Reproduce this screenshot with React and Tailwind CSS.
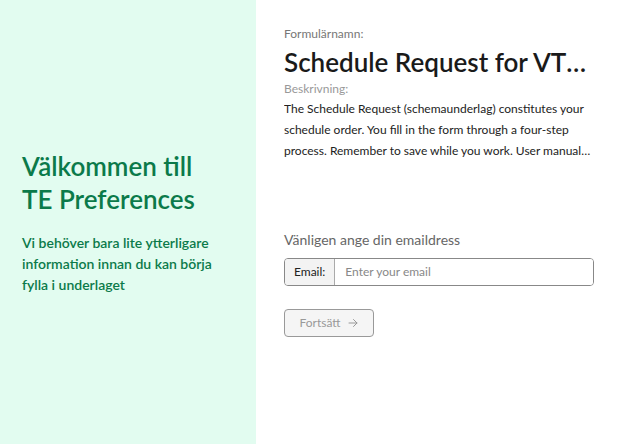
import React from 'react';

const App = () => {
  return (
    <div className="flex h-[444px] w-[619px] bg-white" style={{ fontFamily: 'Lato, "Open Sans", sans-serif' }}>
      {/* Left welcome panel */}
      <div className="flex w-[256px] shrink-0 flex-col justify-center bg-[#e2fcf0] pl-[22px] pr-4">
        <h1 className="text-[26px] font-semibold leading-[33px] text-[#0b7a4a]">
          Välkommen till
          <br />
          TE Preferences
        </h1>
        <p className="mt-[16px] text-[14px] font-semibold leading-[21px] text-[#0b7a4a]">
          Vi behöver bara lite ytterligare information innan du kan börja fylla i underlaget
        </p>
      </div>

      {/* Right form panel */}
      <div className="w-[310px] pl-[28px] pt-[26px]">
        <div className="w-[310px]">
          <div className="text-[12px] leading-[16px] text-[#777]">Formulärnamn:</div>
          <h2 className="mt-[4px] truncate text-[26px] font-semibold leading-[32px] text-[#1a1a1a]">
            Schedule Request for VT26 Period 1 and 2
          </h2>
          <div className="mt-[2px] text-[12px] leading-[18px] text-[#999]">Beskrivning:</div>
          <p className="line-clamp-3 text-[12px] leading-[21px] text-[#222]">
            The Schedule Request (schemaunderlag) constitutes your schedule order. You fill in the form through a four-step process. Remember to save while you work. User manual can be found in the help section.
          </p>
        </div>

        <div className="mt-[69px] w-[310px]">
          <div className="text-[14px] leading-[20px] text-[#666]">Vänligen ange din emaildress</div>
          <div className="mt-[8px] flex h-[28px] overflow-hidden rounded-[4px] border border-[#888]">
            <span className="flex items-center border-r border-[#aaa] bg-[#f3f3f3] px-[9px] text-[12px] text-[#222]">
              Email:
            </span>
            <input
              type="email"
              placeholder="Enter your email"
              className="flex-1 bg-white px-[10px] text-[12px] text-[#222] outline-none placeholder:text-[#888]"
            />
          </div>
          <button
            disabled
            className="mt-[23px] flex h-[28px] w-[90px] items-center justify-center gap-[6px] rounded-[4px] border border-[#999] bg-[#f5f5f5] text-[12px] text-[#999]"
          >
            Fortsätt
            <svg width="12" height="12" viewBox="0 0 24 24" fill="none" stroke="currentColor" strokeWidth="2" strokeLinecap="round" strokeLinejoin="round">
              <path d="M4 12h16M13 5l7 7-7 7" />
            </svg>
          </button>
        </div>
      </div>
    </div>
  );
};

export default App;
